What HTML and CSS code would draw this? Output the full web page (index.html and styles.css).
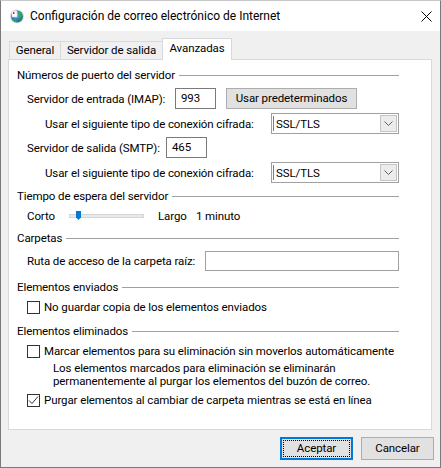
FILE: index.html
```html
<!DOCTYPE html>
<html lang="es">
<head>
<meta charset="utf-8">
<title>Configuración de correo electrónico de Internet</title>
<link rel="stylesheet" href="styles.css">
</head>
<body>
<div class="window">
  <div class="titlebar">
    <svg class="app-icon" width="16" height="16" viewBox="0 0 16 16">
      <defs>
        <radialGradient id="g" cx="0.4" cy="0.35" r="0.7">
          <stop offset="0" stop-color="#9fd3ff"/>
          <stop offset="0.5" stop-color="#2f86d6"/>
          <stop offset="1" stop-color="#1f7a4a"/>
        </radialGradient>
      </defs>
      <circle cx="8" cy="8.5" r="7" fill="#d8dde3"/>
      <circle cx="8" cy="8.5" r="6" fill="url(#g)"/>
      <path d="M9 4 L13 5 L12.5 9 L10 10 L9.5 7 Z" fill="#3aa845"/>
      <path d="M4 12 L7 11 L8 13.5 L5.5 14 Z" fill="#3aa845"/>
      <rect x="3" y="3" width="5" height="6" fill="#ffffff" stroke="#c0c6cc" stroke-width="0.5"/>
      <rect x="4" y="4" width="1.5" height="2" fill="#d9342b"/>
    </svg>
    <span class="title">Configuración de correo electrónico de Internet</span>
    <svg class="close" width="11" height="11" viewBox="0 0 11 11">
      <path d="M0.5 0.5 L10.5 10.5 M10.5 0.5 L0.5 10.5" stroke="#000" stroke-width="1" fill="none"/>
    </svg>
  </div>
  <div class="content">
    <div class="tabs">
      <div class="tab tab-general">General</div>
      <div class="tab tab-salida">Servidor de salida</div>
      <div class="tab tab-avz active">Avanzadas</div>
    </div>
    <div class="panel">
      <div class="group-h"><span>Números de puerto del servidor</span><i class="rule"></i></div>
      <div class="row r-imap">
        <span class="lbl lbl-imap">Servidor de entrada (IMAP):</span>
        <div class="textbox tb-port">993</div>
        <div class="btn btn-default">Usar predeterminados</div>
      </div>
      <div class="row r-conn r-conn1">
        <span class="lbl lbl-conn">Usar el siguiente tipo de conexión cifrada:</span>
        <div class="combo">
          <span class="caret"></span><span class="combo-val">SSL/TLS</span>
          <span class="combo-btn"><svg width="9" height="5" viewBox="0 0 9 5"><path d="M0.5 0.5 L4.5 4.5 L8.5 0.5" stroke="#606060" fill="none"/></svg></span>
        </div>
      </div>
      <div class="row r-smtp">
        <span class="lbl lbl-smtp">Servidor de salida (SMTP):</span>
        <div class="textbox tb-port">465</div>
      </div>
      <div class="row r-conn r-conn2">
        <span class="lbl lbl-conn">Usar el siguiente tipo de conexión cifrada:</span>
        <div class="combo">
          <span class="caret"></span><span class="combo-val">SSL/TLS</span>
          <span class="combo-btn"><svg width="9" height="5" viewBox="0 0 9 5"><path d="M0.5 0.5 L4.5 4.5 L8.5 0.5" stroke="#606060" fill="none"/></svg></span>
        </div>
      </div>

      <div class="group-h g-tiempo"><span>Tiempo de espera del servidor</span><i class="rule"></i></div>
      <div class="row r-slider">
        <span class="lbl lbl-corto">Corto</span>
        <div class="slider"><span class="track"></span><span class="thumb"></span></div>
        <span class="lbl lbl-largo">Largo</span>
        <span class="lbl">1 minuto</span>
      </div>

      <div class="group-h g-carpetas"><span>Carpetas</span><i class="rule"></i></div>
      <div class="row r-ruta">
        <span class="lbl lbl-ruta">Ruta de acceso de la carpeta raíz:</span>
        <div class="textbox tb-ruta"></div>
      </div>

      <div class="group-h g-enviados"><span>Elementos enviados</span><i class="rule"></i></div>
      <div class="row r-check r-chk1">
        <span class="check"></span>
        <span class="lbl">No guardar copia de los elementos enviados</span>
      </div>

      <div class="group-h g-eliminados"><span>Elementos eliminados</span><i class="rule"></i></div>
      <div class="row r-check r-chk2">
        <span class="check"></span>
        <span class="lbl">Marcar elementos para su eliminación sin moverlos automáticamente</span>
      </div>
      <p class="desc">Los elementos marcados para eliminación se eliminarán<br>permanentemente al purgar los elementos del buzón de correo.</p>
      <div class="row r-check r-chk3">
        <span class="check checked"><svg width="11" height="11" viewBox="0 0 11 11"><path d="M1 5.5 L4 8.5 L10 1.5" stroke="#333" stroke-width="1" fill="none"/></svg></span>
        <span class="lbl">Purgar elementos al cambiar de carpeta mientras se está en línea</span>
      </div>
    </div>
    <div class="buttons">
      <div class="btn btn-ok"><span class="focus">Aceptar</span></div>
      <div class="btn btn-cancel">Cancelar</div>
    </div>
  </div>
</div>
</body>
</html>
```
FILE: styles.css
```css
* { box-sizing: border-box; }
html, body { margin: 0; padding: 0; }
body {
  font-family: Roboto, "Noto Sans", sans-serif;
  font-size: 11.5px;
  letter-spacing: -0.1px;
  color: #000;
  background: #f0f0f0;
}
.window {
  width: 441px;
  height: 468px;
  border: 1px solid #7a7a7a;
  border-top-color: #c8c8c8;
  background: #f0f0f0;
  display: flex;
  flex-direction: column;
}
.titlebar {
  height: 30px;
  background: #fff;
  display: flex;
  align-items: center;
  padding-left: 8px;
}
.app-icon { flex: none; }
.title {
  margin-left: 5px;
  font-size: 12px;
  letter-spacing: 0;
  line-height: 16px;
  flex: 1;
}
.close { margin-right: 8px; flex: none; }

.content {
  padding: 7px 0 0 7px;
  display: flex;
  flex-direction: column;
}
.tabs {
  display: flex;
  align-items: flex-start;
  height: 22px;
  margin-bottom: -1px;
  padding-left: 1px;
}
.tab {
  height: 18px;
  margin-top: 3px;
  border: 1px solid #d9d9d9;
  border-bottom: none;
  background: #f0f0f0;
  text-align: center;
  line-height: 16px;
  white-space: nowrap;
}
.tab + .tab { margin-left: -1px; }
.tab-general { width: 52px; }
.tab-salida { width: 103px; }
.tab-avz { width: 70px; }
.tab.active {
  height: 22px;
  margin-top: 0;
  background: #fff;
  position: relative;
  z-index: 1;
  line-height: 19px;
}
.panel {
  width: 424px;
  height: 371px;
  background: #fff;
  border: 1px solid #d9d9d9;
  padding: 7px 0 0 8px;
  display: flex;
  flex-direction: column;
}
.group-h {
  display: flex;
  align-items: center;
  height: 16px;
  width: 382px;
  white-space: nowrap;
}
.rule {
  flex: 1;
  height: 1px;
  background: #a0a0a0;
  margin-left: 4px;
  margin-top: 1px;
}
.row {
  display: flex;
  align-items: center;
  padding-left: 10px;
  white-space: nowrap;
}
.lbl { flex: none; }
.r-imap { height: 21px; margin-top: 5px; }
.lbl-imap { width: 148px; }
.r-conn { height: 21px; padding-left: 28px; }
.r-conn1 { margin-top: 4px; }
.r-smtp { height: 21px; margin-top: 3px; }
.lbl-smtp { width: 139px; }
.r-conn2 { margin-top: 4px; }
.lbl-conn { width: 226px; }

.textbox {
  height: 21px;
  border: 1px solid #7a7a7a;
  background: #fff;
  padding: 0 0 0 5px;
  line-height: 19px;
}
.tb-port { width: 41px; }
.tb-ruta { width: 194px; border-color: #a0a0a0; }

.btn {
  height: 21px;
  background: #e1e1e1;
  border: 1px solid #adadad;
  text-align: center;
  line-height: 19px;
  flex: none;
}
.btn-default { width: 131px; margin-left: 10px; }

.combo {
  width: 128px;
  height: 21px;
  border: 1px solid #a0a0a0;
  background: #fff;
  display: flex;
  align-items: center;
  padding: 0 1px 0 1px;
}
.caret {
  width: 1px;
  height: 15px;
  background: #3c8ce0;
  margin-right: 2px;
}
.combo-val { flex: 1; }
.combo-btn {
  width: 17px;
  height: 17px;
  border: 1px solid #c4c4c4;
  background: #ececec;
  display: flex;
  align-items: center;
  justify-content: center;
}

.g-tiempo { margin-top: 5px; }
.r-slider { height: 16px; margin-top: 4px; }
.lbl-corto { width: 42px; }
.slider {
  width: 75px;
  height: 12px;
  position: relative;
  display: flex;
  align-items: center;
}
.track {
  width: 75px;
  height: 4px;
  background: #e7eaea;
  border: 1px solid #d6d6d6;
}
.thumb {
  position: absolute;
  left: 7px;
  top: 1px;
  width: 5px;
  height: 9px;
  background: #007ad9;
  clip-path: polygon(0 0, 100% 0, 100% 70%, 50% 100%, 0 70%);
}
.lbl-largo { margin-left: 14px; width: 38px; }

.g-carpetas { margin-top: 6px; }
.r-ruta { height: 20px; margin-top: 5px; }
.lbl-ruta { width: 178px; }
.tb-ruta { height: 20px; }

.g-enviados { margin-top: 8px; }
.r-check { height: 16px; }
.r-chk1 { margin-top: 4px; }
.g-eliminados { margin-top: 8px; }
.r-chk2 { margin-top: 4px; }
.r-chk3 { margin-top: 4px; }
.check {
  width: 13px;
  height: 13px;
  border: 1px solid #333;
  background: #fff;
  margin-right: 4px;
  flex: none;
  display: flex;
  align-items: center;
  justify-content: center;
}
.desc {
  margin: 3px 0 0 36px;
  line-height: 13px;
}

.buttons {
  display: flex;
  justify-content: flex-end;
  gap: 8px;
  margin-top: 7px;
  padding-right: 6px;
}
.btn-ok, .btn-cancel { width: 73px; height: 23px; line-height: 21px; }
.btn-ok {
  border: 2px solid #0078d7;
  padding: 1px;
  line-height: 17px;
}
.btn-ok .focus {
  display: block;
  height: 17px;
  border: 1px dotted #000;
  line-height: 15px;
}
```
